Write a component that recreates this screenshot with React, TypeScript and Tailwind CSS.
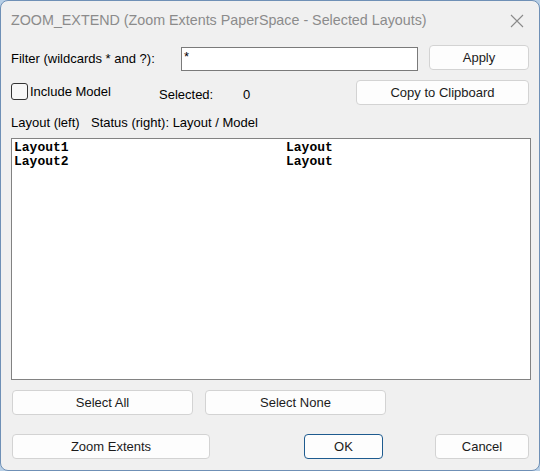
import React from "react";

const ui = { fontFamily: '"Liberation Sans", Arial, sans-serif' };
const mono = { fontFamily: '"Liberation Mono", "DejaVu Sans Mono", monospace' };

const Btn = ({
  label,
  className = "",
  primary = false,
}: {
  label: string;
  className?: string;
  primary?: boolean;
}) => (
  <button
    className={`h-[25px] rounded-[4px] bg-[#fdfdfd] text-[13px] text-[#1b1b1b] flex items-center justify-center ${
      primary ? "border border-[#1e5b8f]" : "border border-[#d3d3d3]"
    } ${className}`}
    style={ui}
  >
    {label}
  </button>
);

const layouts = [
  { name: "Layout1", status: "Layout" },
  { name: "Layout2", status: "Layout" },
];

const App = () => {
  return (
    <div className="w-[540px] h-[471px] bg-[#b7cfe6]">
      <div
        className="w-full h-full rounded-[8px] border border-[#6f90b6] bg-[#f0f0f0] flex flex-col"
        style={ui}
      >
        {/* title bar */}
        <div className="h-[38px] flex items-center justify-between pl-[10px] pr-[14px] pt-[1px]">
          <span className="text-[14.3px] text-[#8b8b8b]">
            ZOOM_EXTEND (Zoom Extents PaperSpace - Selected Layouts)
          </span>
          <svg width="14" height="14" viewBox="0 0 14 14" className="mr-[1px]">
            <path d="M1 1 L13 13 M13 1 L1 13" stroke="#8a8a8a" strokeWidth="1.1" fill="none" />
          </svg>
        </div>

        <div className="pl-[10px] flex flex-col text-[13px] text-black">
          {/* filter */}
          <div className="mt-[6px] h-[26px] flex items-start">
            <span className="w-[170px] mt-[4px]">Filter (wildcards * and ?):</span>
            <div className="mt-[2px] w-[237px] h-[24px] border border-[#7a7a7a] bg-white px-[2px] text-[13px] leading-[18px]">
              *
            </div>
            <Btn label="Apply" className="ml-[11px] w-[100px]" />
          </div>

          {/* options */}
          <div className="mt-[9px] h-[25px] flex items-start">
            <div className="mt-[3px] w-[17px] h-[17px] rounded-[3px] border border-[#333] bg-[#f7f7f7]" />
            <span className="ml-[2px] mt-[2px] w-[129px]">Include Model</span>
            <span className="mt-[5px] w-[84px]">Selected:</span>
            <span className="mt-[5px] w-[113px]">0</span>
            <Btn label="Copy to Clipboard" className="w-[173px]" />
          </div>

          {/* column caption */}
          <div className="mt-[9px] h-[18px] flex items-center">
            <span className="w-[80px]">Layout (left)</span>
            <span>Status (right): Layout / Model</span>
          </div>

          {/* layout list */}
          <div
            className="mt-[6px] w-[520px] h-[242px] border border-[#828282] bg-white pt-[2px] text-[13px] font-bold leading-[14px]"
            style={mono}
          >
            {layouts.map((l) => (
              <div key={l.name} className="flex pl-[2px]">
                <span className="w-[272px]">{l.name}</span>
                <span>{l.status}</span>
              </div>
            ))}
          </div>

          {/* selection buttons */}
          <div className="mt-[10px] flex">
            <Btn label="Select All" className="ml-[1px] w-[181px]" />
            <Btn label="Select None" className="ml-[12px] w-[181px]" />
          </div>

          {/* dialog buttons */}
          <div className="mt-[19px] flex">
            <Btn label="Zoom Extents" className="ml-[1px] w-[198px]" />
            <Btn label="OK" primary className="ml-[94px] w-[79px]" />
            <Btn label="Cancel" className="ml-[52px] w-[94px]" />
          </div>
        </div>
      </div>
    </div>
  );
};

export default App;
